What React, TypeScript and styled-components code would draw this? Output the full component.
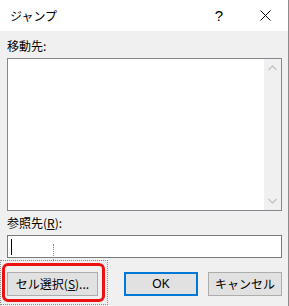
import styled, { createGlobalStyle } from 'styled-components';

const GlobalStyle = createGlobalStyle`
  html, body {
    margin: 0;
    padding: 0;
    background: #f0f0f0;
  }
`;

const Dialog = styled.div`
  position: relative;
  width: 289px;
  height: 306px;
  box-sizing: border-box;
  background: #f0f0f0;
  border-right: 1px solid #8c8c8c;
  display: flex;
  flex-direction: column;
  font-family: "Noto Sans CJK JP", "Liberation Sans", sans-serif;
  font-size: 12px;
  color: #000;
  overflow: hidden;
`;

const TitleBar = styled.div`
  height: 31px;
  flex: none;
  background: #fff;
  display: flex;
  align-items: center;
  padding-left: 10px;
`;

const Title = styled.span`
  flex: 1;
  font-size: 12px;
  line-height: 16px;
`;

const CaptionButton = styled.div`
  width: 46px;
  height: 31px;
  display: flex;
  align-items: center;
  justify-content: center;
  font-family: "Liberation Sans", sans-serif;
  font-size: 15px;
`;

const Body = styled.div`
  flex: 1;
  display: flex;
  flex-direction: column;
  padding: 7px 6px 0 7px;
`;

const Label = styled.div<{ $gap?: number }>`
  line-height: 16px;
  height: 16px;
  margin-top: ${p => p.$gap ?? 0}px;
`;

const ListBox = styled.div`
  margin-top: 4px;
  height: 153px;
  box-sizing: border-box;
  border: 1px solid #828790;
  background: #fff;
  display: flex;
  justify-content: flex-end;
`;

const ScrollBar = styled.div`
  width: 17px;
  background: #f0f0f0;
  display: flex;
  flex-direction: column;
  justify-content: space-between;
  align-items: center;
  padding: 6px 0;
`;

const TextBox = styled.div`
  margin-top: 4px;
  height: 23px;
  box-sizing: border-box;
  border: 1px solid #7a7a7a;
  background: #fff;
  display: flex;
  align-items: center;
  padding-left: 3px;
`;

const Caret = styled.div`
  width: 1px;
  height: 16px;
  background: #000;
`;

const ButtonRow = styled.div`
  margin-top: 14px;
  display: flex;
  gap: 10px;
`;

const Button = styled.div<{ $width: number; $default?: boolean }>`
  width: ${p => p.$width}px;
  height: 24px;
  box-sizing: border-box;
  border: ${p => (p.$default ? '2px solid #0078d7' : '1px solid #adadad')};
  background: #e1e1e1;
  display: flex;
  align-items: center;
  justify-content: center;
  font-size: 12px;
  line-height: 16px;
`;

const PushRight = styled.div`
  flex: 1;
`;

const Underline = styled.span`
  text-decoration: underline;
`;

const Latin = styled.span`
  font-family: "Liberation Sans", sans-serif;
`;

const Highlight = styled.div`
  position: absolute;
  left: 2px;
  top: 263px;
  width: 103px;
  height: 39px;
  box-sizing: border-box;
  border: 3px solid #ee1111;
  border-radius: 6px;
`;

const FocusDots = styled.div`
  position: absolute;
  left: 0;
  top: 260px;
  width: 108px;
  height: 45px;
  box-sizing: border-box;
  border: 1px dotted #8a8a8a;
`;

const CalloutLine = styled.div`
  position: absolute;
  left: 53px;
  top: 244px;
  height: 16px;
  border-left: 1px dotted #8a8a8a;
`;

const Chevron = ({ up }: { up?: boolean }) => (
  <svg width="9" height="6" viewBox="0 0 9 6">
    <path
      d={up ? 'M0.5 5 L4.5 1 L8.5 5' : 'M0.5 1 L4.5 5 L8.5 1'}
      fill="none"
      stroke="#c5c5c5"
      strokeWidth="1.5"
    />
  </svg>
);

export default function App() {
  return (
    <>
      <GlobalStyle />
      <Dialog>
        <TitleBar>
          <Title>ジャンプ</Title>
          <CaptionButton>?</CaptionButton>
          <CaptionButton>
            <svg width="11" height="11" viewBox="0 0 11 11">
              <path d="M0.5 0.5 L10.5 10.5 M10.5 0.5 L0.5 10.5" stroke="#000" strokeWidth="1" />
            </svg>
          </CaptionButton>
        </TitleBar>
        <Body>
          <Label>移動先:</Label>
          <ListBox>
            <ScrollBar>
              <Chevron up />
              <Chevron />
            </ScrollBar>
          </ListBox>
          <Label $gap={4}>
            参照先(<Underline>R</Underline>):
          </Label>
          <TextBox>
            <Caret />
          </TextBox>
          <ButtonRow>
            <Button $width={91}>
              セル選択(<Underline>S</Underline>)...
            </Button>
            <PushRight />
            <Button $width={74} $default>
              <Latin>OK</Latin>
            </Button>
            <Button $width={74}>キャンセル</Button>
          </ButtonRow>
        </Body>
        <CalloutLine />
        <FocusDots />
        <Highlight />
      </Dialog>
    </>
  );
}
